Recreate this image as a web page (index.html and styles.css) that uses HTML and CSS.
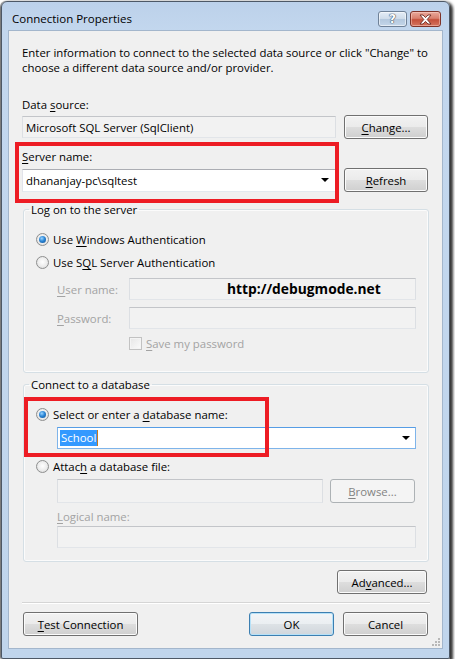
FILE: index.html
```html
<!DOCTYPE html>
<html>
<head>
<meta charset="utf-8">
<title>Connection Properties</title>
<link rel="stylesheet" href="styles.css">
</head>
<body>
<div class="window">
  <div class="titlebar">
    <span class="title">Connection Properties</span>
    <div class="caption-btns">
      <span class="cbtn help"><span class="q">?</span></span>
      <span class="cbtn close">
        <svg width="15" height="11" viewBox="0 0 15 11"><path d="M2 1 L5 1 L7.5 3.6 L10 1 L13 1 L9.2 5.5 L13 10 L10 10 L7.5 7.4 L5 10 L2 10 L5.8 5.5 Z" fill="#fff" stroke="#6b2a22" stroke-width="0.9" stroke-linejoin="round"/></svg>
      </span>
    </div>
  </div>
  <div class="client">
    <p class="intro">Enter information to connect to the selected data source or click "Change" to<br>choose a different data source and/or provider.</p>

    <div class="label lbl-ds">Data <u>s</u>ource:</div>
    <div class="row row-ds">
      <div class="textbox readonly ds-box">Microsoft SQL Server (SqlClient)</div>
      <div class="btn btn-side"><u>C</u>hange...</div>
    </div>

    <div class="label lbl-server"><u>S</u>erver name:</div>
    <div class="row row-server">
      <div class="combo server-combo"><span class="combo-text">dhananjay-pc\sqltest</span><span class="arrow"></span></div>
      <div class="btn btn-side"><u>R</u>efresh</div>
    </div>

    <fieldset class="group group-logon">
      <legend>Log on to the server</legend>
      <div class="radio-row"><span class="radio checked"></span><span>Use <u>W</u>indows Authentication</span></div>
      <div class="radio-row r-sql"><span class="radio"></span><span>Use S<u>Q</u>L Server Authentication</span></div>
      <div class="field-row fr-user">
        <span class="flabel"><u>U</u>ser name:</span>
        <div class="textbox disabled cred-box"><span class="watermark">http://debugmode.net</span></div>
      </div>
      <div class="field-row fr-pass">
        <span class="flabel"><u>P</u>assword:</span>
        <div class="textbox disabled cred-box"></div>
      </div>
      <div class="check-row"><span class="checkbox"></span><span><u>S</u>ave my password</span></div>
    </fieldset>

    <fieldset class="group group-db">
      <legend>Connect to a database</legend>
      <div class="radio-row"><span class="radio checked"></span><span>Select or enter a <u>d</u>atabase name:</span></div>
      <div class="combo focus db-combo"><span class="sel">School</span><span class="caret"></span><span class="spacer"></span><span class="arrow"></span></div>
      <div class="radio-row r-attach"><span class="radio"></span><span>Attac<u>h</u> a database file:</span></div>
      <div class="file-row">
        <div class="textbox disabled file-box"></div>
        <div class="btn disabled browse"><u>B</u>rowse...</div>
      </div>
      <div class="sublabel"><u>L</u>ogical name:</div>
      <div class="textbox disabled logical-box"></div>
    </fieldset>

    <div class="adv-row"><div class="btn advanced">Ad<u>v</u>anced...</div></div>
    <div class="separator"></div>
    <div class="bottom-row">
      <div class="btn test"><u>T</u>est Connection</div>
      <div class="grow"></div>
      <div class="btn default ok">OK</div>
      <div class="btn cancel">Cancel</div>
    </div>

    <div class="annot annot-server"></div>
    <div class="annot annot-db"></div>
    <svg class="grip" width="10" height="10" viewBox="0 0 10 10">
      <g fill="#b8b8b8">
        <rect x="7" y="1" width="2" height="2"/>
        <rect x="4" y="4" width="2" height="2"/><rect x="7" y="4" width="2" height="2"/>
        <rect x="1" y="7" width="2" height="2"/><rect x="4" y="7" width="2" height="2"/><rect x="7" y="7" width="2" height="2"/>
      </g>
    </svg>
  </div>
</div>
</body>
</html>
```

FILE: styles.css
```css
* { box-sizing: border-box; }
html, body { margin: 0; padding: 0; background: #ffffff; }
body {
  font-family: "Open Sans", "Noto Sans", sans-serif;
  font-size: 11.4px;
  color: #000;
}
u { text-decoration: underline; text-underline-offset: 2px; }

.window {
  margin: 1px 0 0 1px;
  width: 449px;
  height: 658px;
  border: 1px solid #4d5866;
  border-radius: 6px 6px 2px 2px;
  background: linear-gradient(to bottom, #bcd1ea 0px, #c3d7ee 30px, #c0d5ec 100%);
  box-shadow: 2px 2px 3px 1px rgba(0,0,0,0.8), -1px 0 1px rgba(0,0,0,0.5);
  padding: 0 6px 9px 6px;
  display: flex;
  flex-direction: column;
}

.titlebar {
  height: 28px;
  margin: 0 -6px;
  padding: 0 8px 0 10px;
  display: flex;
  align-items: flex-start;
  justify-content: space-between;
}
.title {
  margin-top: 9px;
  line-height: 16px;
  font-size: 11.5px;
  color: #000;
}
.caption-btns { display: flex; gap: 3px; margin-top: 9px; }
.cbtn {
  height: 16px;
  border-radius: 3px;
  display: flex;
  align-items: center;
  justify-content: center;
}
.help {
  width: 29px;
  border: 1px solid #6f8197;
  background: linear-gradient(to bottom, #e4edf7 0%, #cfdcea 48%, #b4c8de 52%, #c4d6e9 100%);
  box-shadow: inset 0 0 0 1px rgba(255,255,255,0.55);
}
.help .q {
  font-family: "DejaVu Sans", sans-serif;
  font-weight: bold;
  font-size: 12px;
  line-height: 12px;
  color: #fff;
  text-shadow: 0 0 1px #3e4d60, 0 0 1px #3e4d60, 0 0 1px #3e4d60;
}
.close {
  width: 31px;
  border: 1px solid #7e3329;
  background: linear-gradient(to bottom, #e9a99b 0%, #d9806e 45%, #c4503b 55%, #d5745f 100%);
  box-shadow: inset 0 0 0 1px rgba(255,220,210,0.45);
}

.client {
  position: relative;
  flex: 1;
  background: #f0f0f0;
  border: 1px solid #a3b6cc;
  padding: 14px 13px 0 13px;
  display: flex;
  flex-direction: column;
}

.intro { margin: 0; line-height: 15px; white-space: nowrap; }
.label { line-height: 15px; }
.lbl-ds { margin-top: 22px; }
.lbl-server { margin-top: 10px; }

.row { display: flex; align-items: center; gap: 8px; height: 24px; }
.row-ds { margin-top: 3px; }
.row-server { margin-top: 4px; }

.textbox {
  height: 22px;
  border: 1px solid;
  border-color: #abadb3 #dbdfe6 #e3e9ef #e2e3ea;
  background: #fff;
  padding: 0 3px;
  display: flex;
  align-items: center;
  flex: none;
}
.textbox.readonly, .textbox.disabled {
  background: #f2f2f2;
  border-color: #c3c5c9 #dcdfe3 #e2e5e9 #dcdfe3;
}
.ds-box { width: 314px; }

.combo {
  height: 23px;
  border: 1px solid;
  border-color: #abadb3 #dbdfe6 #e3e9ef #e2e3ea;
  background: #fff;
  display: flex;
  align-items: center;
  padding: 0 6px 0 3px;
  flex: none;
}
.server-combo { width: 314px; justify-content: space-between; }
.arrow {
  width: 0; height: 0;
  border-left: 4px solid transparent;
  border-right: 4px solid transparent;
  border-top: 4px solid #000;
  flex: none;
}

.btn {
  height: 24px;
  display: flex;
  align-items: center;
  justify-content: center;
  border: 1px solid #707070;
  border-radius: 3px;
  background: linear-gradient(to bottom, #f2f2f2 0%, #ebebeb 48%, #dddddd 52%, #cfcfcf 100%);
  box-shadow: inset 0 0 0 1px #fbfbfb;
  flex: none;
}
.btn-side { width: 84px; }
.btn.disabled {
  border-color: #adb2b5;
  background: #f4f4f4;
  box-shadow: none;
  color: #838383;
}
.btn.default {
  border-color: #3c7fb1;
  background: linear-gradient(to bottom, #f2f5f8 0%, #ebeff2 48%, #dde2e6 52%, #d0d6dc 100%);
  box-shadow: inset 0 0 0 1px #b6e1f8;
}

.group {
  margin: 0 0 0 1px;
  width: 406px;
  min-width: 0;
  border: 1px solid #d5dfe5;
  border-radius: 3px;
  box-shadow: inset 0 0 0 1px rgba(255,255,255,0.7);
  padding: 15px 12px 21px 12px;
}
.group legend {
  margin-left: -7px;
  padding: 0 2px;
  line-height: 15px;
}
.group-logon { margin-top: 10px; }
.group-db { margin-top: 4px; padding-bottom: 13px; }

.radio-row { display: flex; align-items: center; gap: 4px; height: 15px; }
.r-sql { margin-top: 8px; }
.r-attach { margin-top: 10px; }
.radio {
  position: relative;
  width: 13px; height: 13px;
  border-radius: 50%;
  border: 1px solid #8e8f8f;
  background: radial-gradient(circle at 50% 45%, #ffffff 0%, #ececec 55%, #cfcfcf 100%);
  flex: none;
}
.radio.checked::after {
  content: "";
  position: absolute;
  left: 2px; top: 2px;
  width: 7px; height: 7px;
  border-radius: 50%;
  background: radial-gradient(circle at 40% 35%, #9ad4ff 0%, #2b86d6 45%, #0f4d8f 100%);
}

.field-row { display: flex; align-items: center; margin-left: 21px; color: #a3a3a3; }
.fr-user { margin-top: 8px; }
.fr-pass { margin-top: 7px; }
.flabel { width: 72px; flex: none; }
.cred-box { width: 287px; }
.watermark {
  padding-left: 94px;
  font-family: "Open Sans", sans-serif;
  font-weight: 700;
  font-size: 13.8px;
  color: #000;
  line-height: 18px;
}

.check-row {
  display: flex; align-items: center; gap: 4px;
  height: 15px; margin-top: 7px; margin-left: 93px;
  color: #a3a3a3;
}
.checkbox {
  width: 13px; height: 13px; flex: none;
  border: 1px solid #c2c2c2;
  background: linear-gradient(135deg, #e6e6e6, #fbfbfb);
  box-shadow: inset 0 0 0 1px #f4f4f4;
}

.db-combo {
  margin-top: 5px;
  margin-left: 21px;
  width: 359px;
  height: 22px;
  border-color: #569de5 #7eb4ea #7eb4ea #7eb4ea;
  padding: 0 5px 0 2px;
}
.sel {
  background: #3399ff;
  color: #fff;
  line-height: 16px;
  padding: 0 1px;
}
.caret { width: 1px; height: 16px; background: #c87a1e; }
.spacer { flex: 1; }

.file-row { display: flex; gap: 7px; margin-top: 5px; margin-left: 21px; }
.file-box { width: 266px; height: 24px; }
.browse { width: 85px; }
.sublabel { margin-top: 6px; margin-left: 21px; line-height: 15px; color: #a3a3a3; }
.logical-box { margin-top: 2px; margin-left: 21px; width: 359px; }

.adv-row { display: flex; justify-content: flex-end; margin-top: 8px; padding-right: 2px; }
.advanced { width: 90px; }
.separator {
  margin-top: 8px;
  margin-right: -1px;
  height: 2px;
  border-top: 1px solid #d5d5d5;
  border-bottom: 1px solid #ffffff;
}
.bottom-row { display: flex; gap: 9px; margin-top: 8px; padding: 0 1px; }
.grow { flex: 1; }
.test { width: 115px; }
.ok, .cancel { width: 85px; }

.annot {
  position: absolute;
  border: 4px solid #ed1c24;
  pointer-events: none;
}
.annot-server { left: 6px; top: 111px; width: 324px; height: 61px; }
.annot-db { left: 15px; top: 366px; width: 245px; height: 60px; }

.grip { position: absolute; right: 1px; bottom: 1px; }
```
